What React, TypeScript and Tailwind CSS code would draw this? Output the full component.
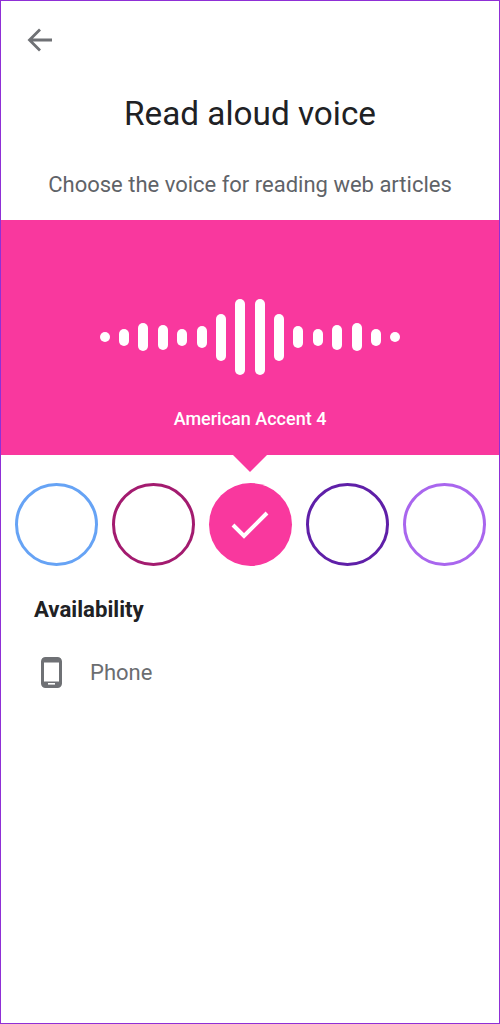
export default function App() {
  const bars = [10, 17, 28, 25, 17, 22, 47, 76, 76, 47, 22, 17, 25, 28, 17, 10];
  return (
    <div className="h-[1024px] w-[500px] overflow-hidden border border-[#8f2fd6] bg-white font-['Roboto',sans-serif]">
      <div className="flex h-[78px] items-start pl-[26px] pt-[26px]">
        <svg width="26" height="26" viewBox="0 0 26 26" fill="none" stroke="#6f7175" strokeWidth="2.800">
          <path d="M25 13H3M13 2.500L2.500 13L13 23.500" />
        </svg>
      </div>
      <h1 className="text-center text-[33.300px] leading-[70px] font-normal text-[#202124]">Read aloud voice</h1>
      <p className="mt-[1px] text-center text-[22px] leading-[70px] text-[#5f6368]">Choose the voice for reading web articles</p>
      <div className="flex h-[235px] flex-col items-center bg-[#f9389e]">
        <div className="mt-[79px] flex h-[76px] items-center gap-[9.400px]">
          {bars.map((h, i) => (
            <div key={i} className="w-[10px] rounded-full bg-white" style={{ height: h }} />
          ))}
        </div>
        <div className="mt-[33px] text-[18px] leading-[22px] font-medium text-white">American Accent 4</div>
      </div>
      <div className="mx-auto h-0 w-0 border-x-[17px] border-t-[17px] border-x-transparent border-t-[#f9389e]" />
      <div className="mt-[11px] flex justify-center gap-[14px]">
        <div className="size-[83px] rounded-full border-[3.500px] border-[#66a3f5]" />
        <div className="size-[83px] rounded-full border-[3.500px] border-[#a31b6f]" />
        <div className="flex size-[83px] items-center justify-center rounded-full bg-[#f9389e]">
          <svg width="38" height="30" viewBox="0 0 38 30" fill="none" stroke="white" strokeWidth="4">
            <path d="M2 15L13 26L36 3" />
          </svg>
        </div>
        <div className="size-[83px] rounded-full border-[3.500px] border-[#5f1fa8]" />
        <div className="size-[83px] rounded-full border-[3.500px] border-[#a966ee]" />
      </div>
      <h2 className="mt-[29px] ml-[33px] text-[22.200px] leading-[28px] font-bold text-[#202124]">Availability</h2>
      <div className="mt-[34px] ml-[40px] flex items-center gap-[28px]">
        <svg width="21" height="31" viewBox="0 0 21 31" fill="none">
          <rect x="1.500" y="1.500" width="18" height="28" rx="3" stroke="#6f7175" strokeWidth="3" />
          <rect x="1.500" y="1.500" width="18" height="4" fill="#6f7175" />
          <rect x="1.500" y="24.500" width="18" height="5" rx="2" fill="#6f7175" />
          <rect x="7" y="26" width="7" height="1.600" fill="white" />
        </svg>
        <span className="text-[22px] leading-[28px] text-[#6b6d70]">Phone</span>
      </div>
    </div>
  );
}
